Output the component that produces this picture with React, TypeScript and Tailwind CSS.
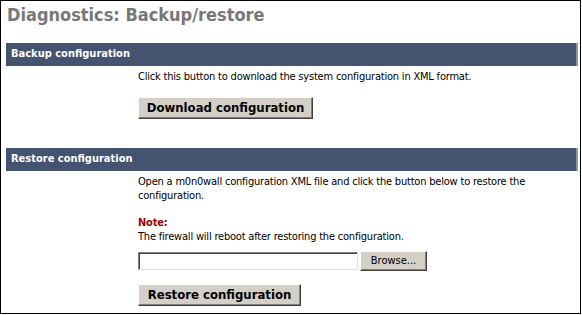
import React from 'react';

const font = { fontFamily: '"DejaVu Sans Condensed", "Liberation Sans", sans-serif' };

const SectionBar: React.FC<{ title: string }> = ({ title }) => (
  <div className="h-[23px] bg-[#435370] border-r-2 border-r-[#8d95a6] flex items-center pl-[5px] text-[11px] font-bold text-white">
    {title}
  </div>
);

const WinButton: React.FC<{ label: string; className: string }> = ({ label, className }) => (
  <button
    className={`bg-[#d4d0c8] border border-t-white border-l-white border-r-[#404040] border-b-[#404040] shadow-[inset_-1px_-1px_0_#808080] text-black tracking-normal ${className}`}
  >
    {label}
  </button>
);

export default function App() {
  return (
    <div className="w-[582px] h-[315px] bg-white" style={font}>
      <div className="w-[581px] h-[314px] border border-black pl-[5px] pr-[2px] flex flex-col">
        <h1 className="pl-[1px] pt-[3px] h-[42px] text-[18px] leading-[22px] font-bold text-[#777777]">
          Diagnostics: Backup/restore
        </h1>

        <SectionBar title="Backup configuration" />
        <div className="flex text-[11px] leading-[14px] tracking-[-0.2px] text-black">
          <div className="w-[132px] shrink-0" />
          <div className="pt-[4px] flex flex-col">
            <p>Click this button to download the system configuration in XML format.</p>
            <WinButton label="Download configuration" className="mt-[13px] w-[175px] h-[22px] text-[13px] font-bold" />
          </div>
        </div>

        <div className="h-[29px]" />

        <SectionBar title="Restore configuration" />
        <div className="flex text-[11px] leading-[14px] tracking-[-0.2px] text-black">
          <div className="w-[132px] shrink-0" />
          <div className="pt-[4px] flex flex-col">
            <p>
              Open a m0n0wall configuration XML file and click the button below to restore the
              <br />
              configuration.
            </p>
            <p className="mt-[13px]">
              <span className="font-bold text-[#990000]">Note:</span>
              <br />
              The firewall will reboot after restoring the configuration.
            </p>
            <div className="mt-[7px] flex items-center gap-[2px]">
              <input
                type="text"
                className="w-[220px] h-[18px] bg-white border border-t-[#808080] border-l-[#808080] border-r-[#e4e2dc] border-b-[#e4e2dc] shadow-[inset_1px_1px_0_#404040] outline-none"
              />
              <WinButton label="Browse..." className="w-[67px] h-[20px] text-[11px]" />
            </div>
            <WinButton label="Restore configuration" className="mt-[13px] w-[163px] h-[22px] text-[13px] font-bold" />
          </div>
        </div>
      </div>
    </div>
  );
}
